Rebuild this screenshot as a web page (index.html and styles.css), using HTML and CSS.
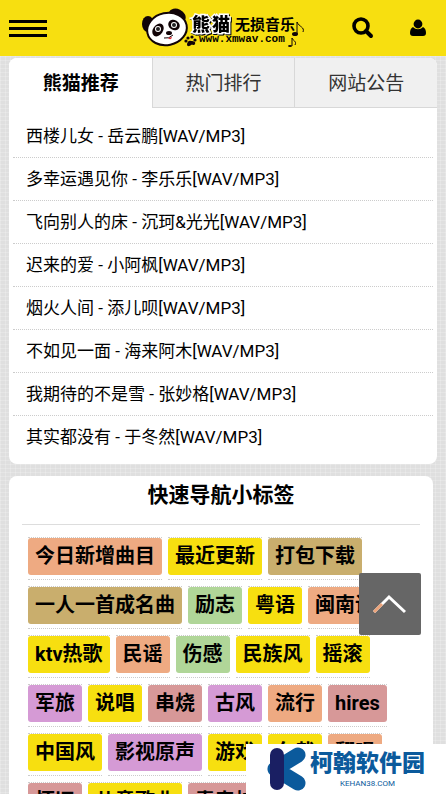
FILE: index.html
```html
<!DOCTYPE html>
<html lang="zh-CN">
<head>
    <meta charset="UTF-8">
    <meta name="viewport" content="width=device-width, initial-scale=1.0">
    <title>熊猫无损音乐</title>
    <link rel="stylesheet" href="styles.css">
</head>
<body>
    <header class="header">
        <button type="button" class="menu-btn" aria-label="菜单">
            <span></span>
            <span></span>
            <span></span>
        </button>
        <a href="#" class="logo" aria-label="熊猫无损音乐">
            <svg width="164" height="42" viewBox="0 0 164 42">
                <!-- panda -->
                <ellipse cx="7" cy="17" rx="6" ry="8" fill="#110407"/>
                <ellipse cx="36" cy="9" rx="9" ry="7" transform="rotate(25 36 9)" fill="#110407"/>
                <ellipse cx="26" cy="22" rx="20" ry="16" transform="rotate(-12 26 22)" fill="#fff" stroke="#110407" stroke-width="2"/>
                <ellipse cx="17" cy="23" rx="5" ry="7" transform="rotate(35 17 23)" fill="#110407"/>
                <ellipse cx="33" cy="18" rx="6" ry="5" transform="rotate(30 33 18)" fill="#110407"/>
                <circle cx="17" cy="22" r="3" fill="#fff"/>
                <circle cx="33" cy="18" r="3" fill="#fff"/>
                <circle cx="17" cy="22" r="2" fill="#222"/>
                <circle cx="33" cy="18" r="2" fill="#222"/>
                <ellipse cx="28" cy="26" rx="3" ry="2" fill="#110407"/>
                <path d="M23 31q5 1 9-3" fill="none" stroke="#110407"/>
                <path d="M27 31q3 3 4-1z" fill="#e4252b"/>
                <!-- paw -->
                <path d="M46 38c0-3 2-5 4-4 3 0 5 1 4 3s-3 0-4 1-3 2-4 0z" fill="#110407"/>
                <circle cx="45" cy="34" r="1.6" fill="#110407"/>
                <circle cx="47" cy="31" r="1.6" fill="#110407"/>
                <circle cx="51" cy="30" r="1.6" fill="#110407"/>
                <circle cx="54" cy="33" r="1.6" fill="#110407"/>
                <text x="51" y="24" class="logo-panda">熊</text>
                <text x="71" y="24" class="logo-panda">猫</text>
                <text x="94" y="23" class="logo-name">无损音乐</text>
                <text x="58" y="35" class="logo-url">www.xmwav.com</text>
                <!-- notes -->
                <g fill="none" stroke="#110407">
                    <path d="M156 27V15c2 5 8 5 6 10"/>
                    <path d="M151 39v-8c1 3 5 3 3 7"/>
                </g>
                <ellipse cx="154" cy="27" rx="3" ry="2" fill="#110407"/>
                <ellipse cx="149" cy="39" rx="2" ry="1" fill="#110407"/>
            </svg>
        </a>
        <div class="header-tools">
            <button type="button" class="icon-btn" aria-label="搜索">
                <svg width="22" height="22" viewBox="0 0 22 22" fill="none" stroke="#000">
                    <circle cx="9" cy="9" r="7" stroke-width="3.6"/>
                    <path d="M14 14l5 5" stroke-width="4" stroke-linecap="round"/>
                </svg>
            </button>
            <button type="button" class="icon-btn" aria-label="用户">
                <svg width="16" height="18" viewBox="0 0 16 18">
                    <circle cx="8" cy="5" r="4.4"/>
                    <path d="M3 8c3 3 7 3 10 0 2 1 3 3 3 6 0 2-1 3-3 3H3c-2 0-3-1-3-3 0-3 1-5 3-6z"/>
                </svg>
            </button>
        </div>
    </header>

    <main>
        <section class="card songs">
            <div class="tabs">
                <button type="button" class="tab active">熊猫推荐</button>
                <button type="button" class="tab">热门排行</button>
                <button type="button" class="tab">网站公告</button>
            </div>
            <ul class="song-list">
                <li><a href="#">西楼儿女 - 岳云鹏[WAV/MP3]</a></li>
                <li><a href="#">多幸运遇见你 - 李乐乐[WAV/MP3]</a></li>
                <li><a href="#">飞向别人的床 - 沉珂&amp;光光[WAV/MP3]</a></li>
                <li><a href="#">迟来的爱 - 小阿枫[WAV/MP3]</a></li>
                <li><a href="#">烟火人间 - 添儿呗[WAV/MP3]</a></li>
                <li><a href="#">不如见一面 - 海来阿木[WAV/MP3]</a></li>
                <li><a href="#">我期待的不是雪 - 张妙格[WAV/MP3]</a></li>
                <li><a href="#">其实都没有 - 于冬然[WAV/MP3]</a></li>
            </ul>
        </section>

        <section class="card nav-tags">
            <h2>快速导航小标签</h2>
            <ul class="tag-list">
                <li><a href="#" class="orange">今日新增曲目</a></li>
                <li><a href="#" class="yellow">最近更新</a></li>
                <li><a href="#" class="tan">打包下载</a></li>
                <li><a href="#" class="tan">一人一首成名曲</a></li>
                <li><a href="#" class="green">励志</a></li>
                <li><a href="#" class="yellow">粤语</a></li>
                <li><a href="#" class="orange">闽南语</a></li>
                <li><a href="#" class="yellow">ktv热歌</a></li>
                <li><a href="#" class="orange">民谣</a></li>
                <li><a href="#" class="green">伤感</a></li>
                <li><a href="#" class="yellow">民族风</a></li>
                <li><a href="#" class="yellow">摇滚</a></li>
                <li><a href="#" class="purple">军旅</a></li>
                <li><a href="#" class="yellow">说唱</a></li>
                <li><a href="#" class="red">串烧</a></li>
                <li><a href="#" class="purple">古风</a></li>
                <li><a href="#" class="orange">流行</a></li>
                <li><a href="#" class="red">hires</a></li>
                <li><a href="#" class="yellow">中国风</a></li>
                <li><a href="#" class="purple">影视原声</a></li>
                <li><a href="#" class="yellow">游戏</a></li>
                <li><a href="#" class="yellow">车载</a></li>
                <li><a href="#" class="orange">翻唱</a></li>
                <li><a href="#" class="red">怀旧</a></li>
                <li><a href="#" class="yellow">儿童歌曲</a></li>
                <li><a href="#" class="red">青春校园</a></li>
            </ul>
        </section>
    </main>

    <button type="button" class="back-top" aria-label="返回顶部">
        <svg width="34" height="20" viewBox="0 0 34 20" fill="none" stroke-width="3">
            <path d="M1 18L16 3l16 15" stroke="#fff"/>
            <path d="M1 18l8-8" stroke="#eca47b"/>
        </svg>
    </button>

    <a href="#" class="watermark">
        <svg width="40" height="44" viewBox="0 0 40 44" fill="none" stroke-linecap="round">
            <path d="M8 22L31 8M8 22l23 14" stroke="#0b5a9c" stroke-width="15"/>
            <path d="M10 8v28" stroke="#1a1f63" stroke-width="14"/>
        </svg>
        <span class="watermark-text">
            <strong>柯翰软件园</strong>
            <small>KEHAN38.COM</small>
        </span>
    </a>
</body>
</html>
```

FILE: styles.css
```css
* {
    box-sizing: border-box;
}

body {
    margin: 0;
    font-family: Roboto, "Noto Sans CJK SC", sans-serif;
    color: #000;
    background-color: #dfdfdf;
    background-image:
        repeating-linear-gradient(0deg, rgba(255, 255, 255, 0.2) 0 1px, transparent 1px 4px),
        repeating-linear-gradient(90deg, rgba(255, 255, 255, 0.2) 0 1px, transparent 1px 5px);
}

a {
    color: inherit;
    text-decoration: none;
}

button {
    padding: 0;
    border: none;
    background: none;
    font-family: inherit;
    color: inherit;
    cursor: pointer;
}

ul {
    margin: 0;
    padding: 0;
    list-style: none;
}

svg {
    display: block;
}

.header {
    display: grid;
    grid-template-columns: 1fr auto 1fr;
    align-items: center;
    height: 56px;
    padding: 0 9px;
    background-color: #f7df10;
}

.menu-btn {
    display: flex;
    flex-direction: column;
    gap: 4px;
    width: 38px;
}

.menu-btn span {
    height: 3px;
    background-color: #000;
}

.logo-panda {
    font-size: 18px;
    font-weight: 900;
    fill: #000;
    stroke: #fff;
    stroke-width: 3px;
    paint-order: stroke;
    filter: drop-shadow(1px 1px 0 #000);
}

.logo-name {
    font-size: 15px;
    font-weight: 700;
}

.logo-url {
    font-family: "Liberation Mono", monospace;
    font-size: 11px;
    font-weight: 700;
}

.header-tools {
    display: flex;
    justify-content: flex-end;
    align-items: center;
    gap: 36px;
    padding-right: 11px;
}

main {
    padding: 2px 9px 12px;
}

.card {
    background-color: #fff;
    border-radius: 8px;
    overflow: hidden;
}

.songs {
    margin-bottom: 12px;
    padding-bottom: 6px;
}

.tabs {
    display: flex;
}

.tab {
    flex: 1;
    height: 50px;
    padding-bottom: 2px;
    border-left: 1px solid #d8d8d8;
    border-bottom: 1px solid #d8d8d8;
    background-color: #f0f0f0;
    color: #333;
    font-size: 19px;
}

.tab.active {
    border-color: #fff;
    background-color: #fff;
    color: #000;
    font-weight: 700;
}

.song-list {
    padding: 7px 4px 0;
}

.song-list li {
    padding-left: 13px;
    border-bottom: 1px dotted #ccc;
    font-size: 17px;
    line-height: 42px;
}

.song-list li:last-child {
    border-bottom: none;
}

.nav-tags {
    margin-right: 4px;
    padding: 0 13px 20px;
}

.nav-tags h2 {
    margin: 0;
    padding-bottom: 9px;
    border-bottom: 1px solid #ddd;
    font-size: 21px;
    line-height: 39px;
    text-align: center;
}

.tag-list {
    display: flex;
    flex-wrap: wrap;
    gap: 6px;
    padding: 12px 6px 0;
}

.tag-list li {
    padding-bottom: 4px;
    border-top: 1px dotted #ccc;
    border-bottom: 1px dotted #ccc;
}

.tag-list a {
    display: block;
    padding: 0 7px;
    border-radius: 3px;
    font-size: 20px;
    font-weight: 700;
    line-height: 37px;
}

.orange {
    background-color: #eeaa82;
}

.yellow {
    background-color: #f7df10;
}

.tan {
    background-color: #c9ae6d;
}

.green {
    background-color: #b0d698;
}

.purple {
    background-color: #d59ad5;
}

.red {
    background-color: #d79898;
}

.back-top {
    position: fixed;
    right: 25px;
    bottom: 159px;
    display: flex;
    justify-content: center;
    align-items: center;
    width: 62px;
    height: 62px;
    border-radius: 2px;
    background-color: #666;
}

.watermark {
    position: fixed;
    right: 0;
    bottom: 0;
    display: flex;
    gap: 3px;
    width: 200px;
    height: 50px;
    padding: 3px 0 0 21px;
    background-color: #fff;
    color: #0b5a9c;
}

.watermark-text {
    display: flex;
    flex-direction: column;
    align-items: center;
}

.watermark-text strong {
    font-size: 23px;
    font-weight: 900;
    line-height: 34px;
}

.watermark-text small {
    font-size: 8px;
    line-height: 6px;
}
```
